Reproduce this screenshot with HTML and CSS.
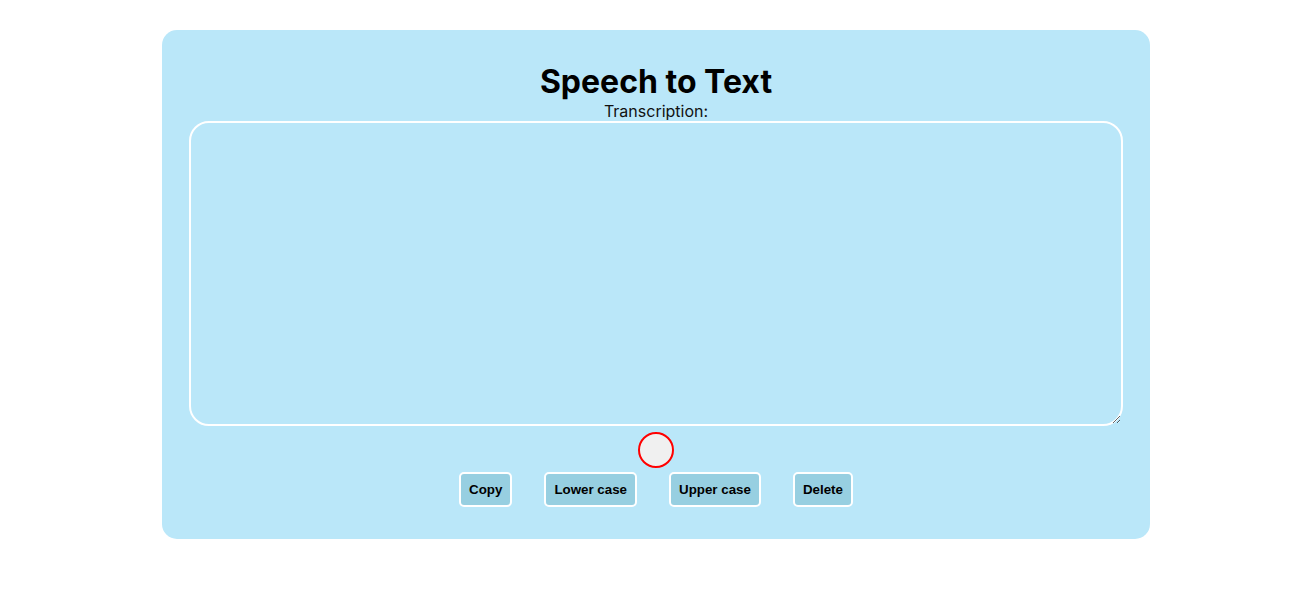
FILE: index.html
```html
<!DOCTYPE html>
<html lang="en">
<head>
<meta charset="utf-8">
<title>Speech to Text</title>
<link rel="stylesheet" href="styles.css">
</head>
<body>
<main class="card">
  <h1 class="title">Speech to Text</h1>
  <label class="label" for="transcript">Transcription:</label>
  <textarea id="transcript" class="transcript"></textarea>
  <div class="mic-row"><button class="mic" type="button" aria-label="Record"></button></div>
  <div class="actions">
    <button class="action" type="button">Copy</button>
    <button class="action" type="button">Lower case</button>
    <button class="action" type="button">Upper case</button>
    <button class="action" type="button">Delete</button>
  </div>
</main>
</body>
</html>
```
FILE: styles.css
```css
html, body {
  margin: 0;
  padding: 0;
  background: #ffffff;
}
body {
  font-family: Inter, "Noto Sans", sans-serif;
  padding: 30px 0 0 14px;
}
.card {
  width: 988px;
  box-sizing: border-box;
  margin: 0 auto;
  background: #bae7f9;
  border-radius: 15px;
  padding: 32px 27px 32px;
  display: flex;
  flex-direction: column;
  align-items: center;
}
.title {
  margin: 0 0 1px;
  font-size: 32px;
  font-weight: 700;
  line-height: 39px;
  color: #000;
}
.label {
  display: block;
  font-size: 16px;
  line-height: 19px;
  color: #111;
}
.transcript {
  display: block;
  width: 100%;
  height: 305px;
  box-sizing: border-box;
  margin: 0;
  background: transparent;
  border: 2px solid #ffffff;
  border-radius: 20px;
  outline: none;
  padding: 10px;
  font-family: Inter, sans-serif;
  font-size: 16px;
}
.mic-row {
  margin-top: 6px;
  display: flex;
  justify-content: center;
}
.mic {
  width: 36px;
  height: 36px;
  box-sizing: border-box;
  border-radius: 50%;
  border: 2px solid #ff0000;
  background: #f0f0f0;
  padding: 0;
  margin: 0;
}
.actions {
  margin-top: 4px;
  display: flex;
  gap: 32px;
  justify-content: center;
}
.action {
  font-family: "Liberation Sans", Arial, sans-serif;
  font-size: 13.333px;
  font-weight: 700;
  line-height: 15px;
  color: #000;
  background: #97cfe1;
  border: 2px solid #ffffff;
  border-radius: 5px;
  padding: 8px 8px;
  margin: 0;
}
```
